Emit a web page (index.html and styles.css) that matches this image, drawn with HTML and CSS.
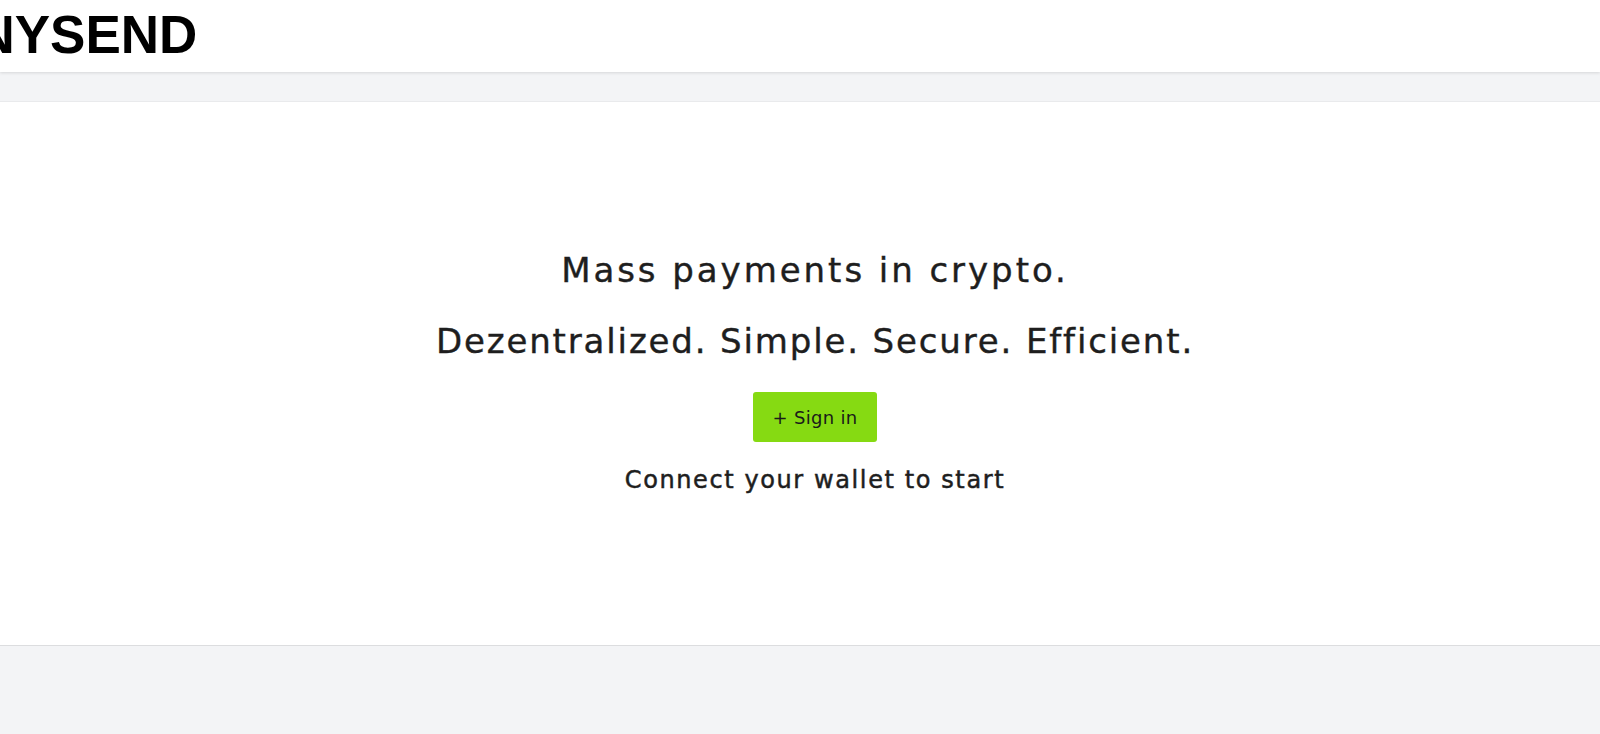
FILE: index.html
```html
<!DOCTYPE html>
<html lang="en">
<head>
<meta charset="utf-8">
<title>Manysend</title>
<link rel="stylesheet" href="styles.css">
</head>
<body>
<header class="topbar">
  <div class="logo">MANYSEND</div>
</header>
<main class="page">
  <section class="hero">
    <h1 class="hero-line first">Mass payments in crypto.</h1>
    <h1 class="hero-line second">Dezentralized. Simple. Secure. Efficient.</h1>
    <button class="signin">+ Sign in</button>
    <p class="hint">Connect your wallet to start</p>
  </section>
</main>
</body>
</html>
```
FILE: styles.css
```css
* { box-sizing: border-box; }
html, body { margin: 0; padding: 0; }
body {
  background: #f3f4f6;
  font-family: "DejaVu Sans", "Open Sans", sans-serif;
  color: #212121;
  overflow: hidden;
  height: 734px;
}
.topbar {
  height: 72px;
  background: #ffffff;
  box-shadow: 0 1px 3px rgba(0,0,0,0.12);
  display: flex;
  align-items: center;
  overflow: hidden;
  position: relative;
  z-index: 1;
}
.logo {
  font-family: "Liberation Sans", Arial, sans-serif;
  font-weight: 700;
  font-size: 53px;
  line-height: 1;
  color: #000;
  white-space: nowrap;
  margin-left: -106px;
  margin-top: -3px;
}
.page {
  padding-top: 29px;
}
.hero {
  height: 545px;
  background: #ffffff;
  border-top: 1px solid #e9eaec;
  border-bottom: 1px solid #dcdddf;
  display: flex;
  flex-direction: column;
  align-items: center;
  padding-top: 144px;
  padding-left: 30px;
}
.hero-line {
  margin: 0;
  font-size: 34px;
  line-height: 48px;
  font-weight: 400;
  color: #1e1e1e;
  -webkit-text-stroke: 0.4px #1e1e1e;
}
.hero-line.first {
  letter-spacing: 2.95px;
}
.hero-line.second {
  margin-top: 23px;
  letter-spacing: 1.85px;
}
.signin {
  margin-top: 27px;
  height: 50px;
  padding: 0 20px;
  background: #86da12;
  border: none;
  border-radius: 3px;
  font-family: "DejaVu Sans", "Open Sans", sans-serif;
  font-size: 18px;
  letter-spacing: 0.3px;
  color: #1a1a1a;
}
.hint {
  margin: 22px 0 0;
  font-size: 24px;
  line-height: 32px;
  font-weight: 400;
  letter-spacing: 1.6px;
  color: #1e1e1e;
  -webkit-text-stroke: 0.5px #1e1e1e;
}
```
